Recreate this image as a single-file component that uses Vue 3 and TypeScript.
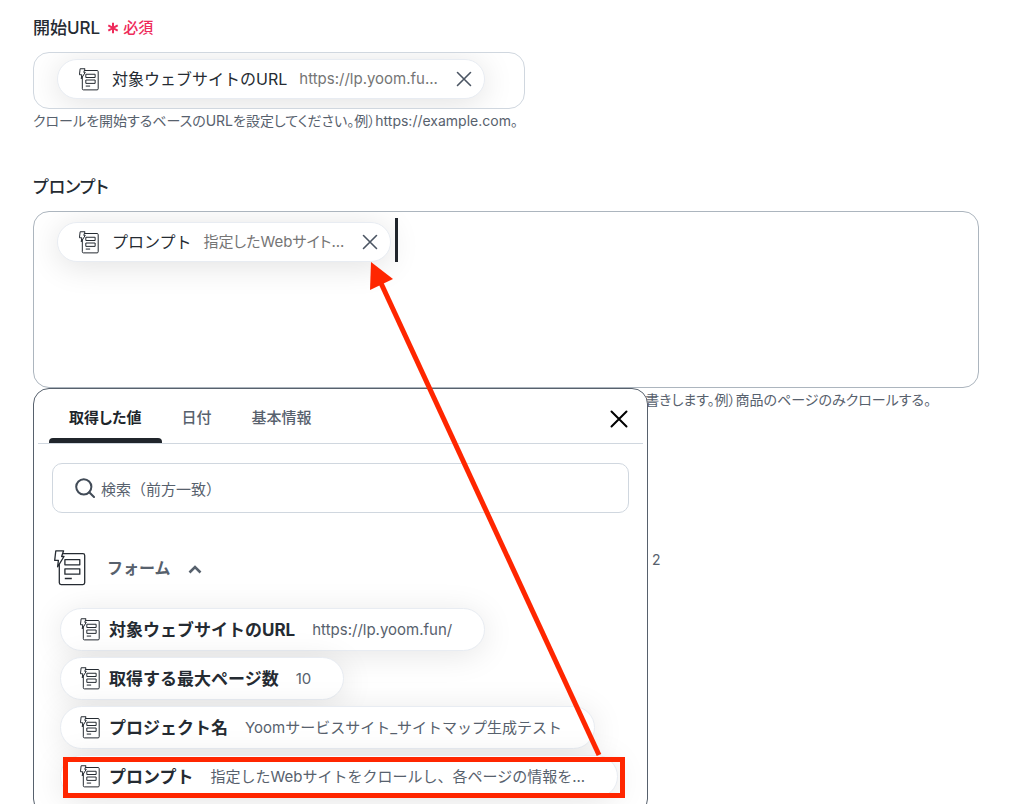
<script setup lang="ts">
import { h, ref, type FunctionalComponent } from 'vue'

interface FormValue {
  name: string
  value: string
}

const FormIcon: FunctionalComponent = () =>
  h('svg', { viewBox: '0 0 32 36', fill: 'none', stroke: '#252b32', 'stroke-linejoin': 'round', 'aria-hidden': 'true' }, [
    h('rect', { x: 5.3, y: 3.6, width: 25.4, height: 31, rx: 1.8 }),
    h('path', { d: 'M1.8 .8H9.6L7.6 6.5H10L3.6 16.8L4.4 10.4H.7Z', fill: '#fff' }),
    h('path', { d: 'M10.9 9.6H25.8V14.8H10.9ZM10.9 18.8H25.8V24.2H10.9ZM10.8 28.5H17.8' }),
  ])

const tabs: string[] = ['取得した値', '日付', '基本情報']
const activeTab = ref<string>('取得した値')
const keyword = ref<string>('')

const values: FormValue[] = [
  { name: '対象ウェブサイトのURL', value: 'https://lp.yoom.fun/' },
  { name: '取得する最大ページ数', value: '10' },
  { name: 'プロジェクト名', value: 'Yoomサービスサイト_サイトマップ生成テスト' },
  { name: 'プロンプト', value: '指定したWebサイトをクロールし、各ページの情報を...' },
]
</script>

<template>
  <main class="page">
    <section class="field">
      <label class="label" for="start-url">
        開始URL
        <span class="required">
          <svg viewBox="0 0 12 12" aria-hidden="true"><path d="M6 .8V11.2M1.3 3.4L10.7 8.6M10.7 3.4L1.3 8.6" /></svg>
          必須
        </span>
      </label>
      <div class="box box-single">
        <span class="chip">
          <FormIcon class="chip-icon" />
          <span class="chip-name">対象ウェブサイトのURL</span>
          <span class="chip-value">https://lp.yoom.fu...</span>
          <button class="remove" type="button" aria-label="削除">
            <svg viewBox="0 0 16 16"><path d="M1.5 1.5L14.5 14.5M14.5 1.5L1.5 14.5" /></svg>
          </button>
        </span>
        <input id="start-url" class="entry" type="text" />
      </div>
      <p class="hint">クロールを開始するベースのURLを設定してください。例）https://example.com。</p>
    </section>

    <section class="field">
      <label class="label" for="prompt">プロンプト</label>
      <div class="anchor">
        <div class="box box-multi">
          <span class="chip">
            <FormIcon class="chip-icon" />
            <span class="chip-name">プロンプト</span>
            <span class="chip-value">指定したWebサイト...</span>
            <button class="remove" type="button" aria-label="削除">
              <svg viewBox="0 0 16 16"><path d="M1.5 1.5L14.5 14.5M14.5 1.5L1.5 14.5" /></svg>
            </button>
          </span>
          <span class="caret"></span>
          <textarea id="prompt" class="entry"></textarea>
        </div>

        <div class="panel">
          <header class="panel-head">
            <nav class="tabs">
              <button
                v-for="tab in tabs"
                :key="tab"
                type="button"
                class="tab"
                :class="{ active: tab === activeTab }"
                @click="activeTab = tab"
              >{{ tab }}</button>
            </nav>
            <button class="close" type="button" aria-label="閉じる">
              <svg viewBox="0 0 18 18"><path d="M1.5 1.5L16.5 16.5M16.5 1.5L1.5 16.5" /></svg>
            </button>
          </header>
          <label class="search">
            <svg viewBox="0 0 20 20" aria-hidden="true"><circle cx="8.8" cy="8.8" r="7.6" /><path d="M14.2 14.2L19 19" /></svg>
            <input v-model="keyword" type="text" placeholder="検索（前方一致）" aria-label="検索" />
          </label>
          <button class="group" type="button">
            <FormIcon class="group-icon" />
            <span>フォーム</span>
            <svg class="chevron" viewBox="0 0 14 9" aria-hidden="true"><path d="M1.5 7.5L7 2L12.5 7.5" /></svg>
          </button>
          <div class="values">
            <button v-for="item in values" :key="item.name" class="value" type="button">
              <FormIcon class="chip-icon" />
              <span class="value-name">{{ item.name }}</span>
              <span class="value-text">{{ item.value }}</span>
            </button>
          </div>
        </div>
      </div>
      <p class="hint hint-end">書きします。例）商品のページのみクロールする。</p>
      <p class="count">2</p>
    </section>

    <svg class="annotation" viewBox="0 0 1032 804" aria-hidden="true">
      <rect x="65.5" y="759.5" width="557" height="36" />
      <path d="M599 755L380 281" />
      <polygon points="371,262 393,279 370,290" />
    </svg>
  </main>
</template>

<style>
body {
  background: #fff;
}
</style>

<style scoped>
.page {
  position: relative;
  box-sizing: border-box;
  min-height: 100vh;
  padding: 16px 53px 0 33px;
  overflow: hidden;
  color: #252b32;
  font-family: Inter, "Noto Sans CJK JP", sans-serif;
  font-size: 16px;
  line-height: 24px;
}

button,
input,
textarea {
  margin: 0;
  padding: 0;
  border: 0;
  background: none;
  color: inherit;
  font: inherit;
}

button {
  cursor: pointer;
}

svg {
  flex: none;
}

.label,
.hint,
.chip-value,
.tab {
  font-feature-settings: "palt";
}

.field + .field {
  margin-top: 44px;
}

.label {
  display: flex;
  align-items: center;
  gap: 7px;
  height: 24px;
  font-size: 17px;
  font-weight: 500;
}

.required {
  display: flex;
  align-items: center;
  gap: 4px;
  color: #ee2b5b;
  font-size: 15px;
}

.required svg {
  width: 12px;
  height: 12px;
  fill: none;
  stroke: #ee2b5b;
  stroke-width: 2;
}

.box {
  display: flex;
  align-items: flex-start;
  box-sizing: border-box;
  border: 1px solid #d0d7df;
  border-radius: 16px;
  overflow: hidden;
}

.box-single {
  width: 52%;
  height: 57px;
  margin-top: 12px;
  padding: 6px 23px;
}

.box-multi {
  height: 177px;
  padding: 6px 23px;
  border-color: #acb5be;
}

.box-multi .chip {
  margin-top: 4px;
}

.anchor {
  position: relative;
  margin-top: 12px;
}

.chip {
  display: flex;
  flex: none;
  align-items: center;
  box-sizing: border-box;
  height: 40px;
  padding: 0 12px 0 21px;
  border: 1px solid #e8ecf2;
  border-radius: 20px;
  background: #fff;
  box-shadow: 0 4px 32px rgba(0, 0, 0, 0.12);
}

.chip-icon {
  width: 20px;
  height: 23px;
  stroke-width: 1.6;
}

.chip-name {
  margin-left: 13px;
}

.chip-value {
  margin-left: 12px;
  color: #757575;
  font-size: 15px;
}

.remove {
  display: flex;
  margin-left: 18px;
}

.remove svg {
  width: 16px;
  height: 16px;
  fill: none;
  stroke: #4b5563;
  stroke-width: 1.6;
  stroke-linecap: round;
}

.entry {
  flex: 1;
  min-width: 0;
  height: 40px;
  outline: none;
  resize: none;
}

.caret {
  width: 3px;
  height: 44px;
  margin-left: 4px;
  background: #20252b;
}

.hint {
  margin: 2px 0 0;
  color: #57616d;
  font-size: 14px;
  line-height: 20px;
}

.hint-end {
  padding-right: 48px;
  text-align: right;
}

.count {
  margin: 140px 0 0 619px;
  color: #57616d;
  font-size: 14px;
  line-height: 20px;
}

.panel {
  position: absolute;
  top: 100%;
  left: 0;
  box-sizing: border-box;
  width: 65%;
  padding: 0 4px 16px;
  border: 1px solid #57616d;
  border-radius: 16px;
  background: #fff;
}

.panel-head {
  display: flex;
  align-items: center;
  justify-content: space-between;
  height: 54px;
  padding: 0 15px 0 11px;
  border-bottom: 1px solid #d0d7df;
}

.tabs {
  display: flex;
  align-self: stretch;
}

.tab {
  position: relative;
  padding: 0 20px;
  border-top: 4px solid transparent;
  color: #57616d;
  font-size: 15px;
  font-weight: 500;
}

.tab.active {
  color: #20252b;
  font-weight: 700;
}

.tab.active::after {
  content: "";
  position: absolute;
  right: 0;
  bottom: 0;
  left: 0;
  height: 5px;
  border-radius: 4px 4px 0 0;
  background: #20252b;
}

.close {
  display: flex;
  margin-top: 6px;
}

.close svg {
  width: 18px;
  height: 18px;
  fill: none;
  stroke: #000;
  stroke-width: 2;
  stroke-linecap: round;
}

.search {
  display: flex;
  align-items: center;
  gap: 6px;
  box-sizing: border-box;
  height: 50px;
  margin: 19px 14px 0;
  padding: 0 22px;
  border: 1px solid #d0d7df;
  border-radius: 10px;
}

.search svg {
  width: 20px;
  height: 20px;
  fill: none;
  stroke: #414b57;
  stroke-width: 2;
  stroke-linecap: round;
}

.search input {
  flex: 1;
  min-width: 0;
  padding-top: 4px;
  outline: none;
  font-size: 15px;
}

.search input::placeholder {
  color: #57616d;
  opacity: 1;
}

.group {
  display: flex;
  align-items: center;
  margin: 37px 0 0 16px;
  color: #57616d;
  font-weight: 700;
}

.group-icon {
  width: 32px;
  height: 36px;
  margin-right: 21px;
  stroke-width: 1.3;
}

.chevron {
  width: 14px;
  height: 9px;
  margin-top: 3px;
  margin-left: 17px;
  fill: none;
  stroke: #57616d;
  stroke-width: 2.6;
}

.values {
  display: flex;
  flex-direction: column;
  align-items: flex-start;
  gap: 6px;
  margin: 22px 0 0 22px;
}

.value {
  display: flex;
  align-items: center;
  box-sizing: border-box;
  height: 43px;
  padding: 0 32px 0 19px;
  border: 1px solid #e8ecf2;
  border-radius: 22px;
  background: #fff;
  box-shadow: 0 4px 32px rgba(0, 0, 0, 0.1);
}

.value-name {
  margin-left: 9px;
  font-size: 17px;
  font-weight: 700;
}

.value-text {
  margin-left: 17px;
  color: #57616d;
  font-size: 15px;
}

.annotation {
  position: absolute;
  top: 0;
  left: 0;
  width: 1032px;
  height: 804px;
  fill: none;
  stroke: #ff2600;
  stroke-width: 5;
  pointer-events: none;
}

.annotation polygon {
  fill: #ff2600;
  stroke: none;
}
</style>
